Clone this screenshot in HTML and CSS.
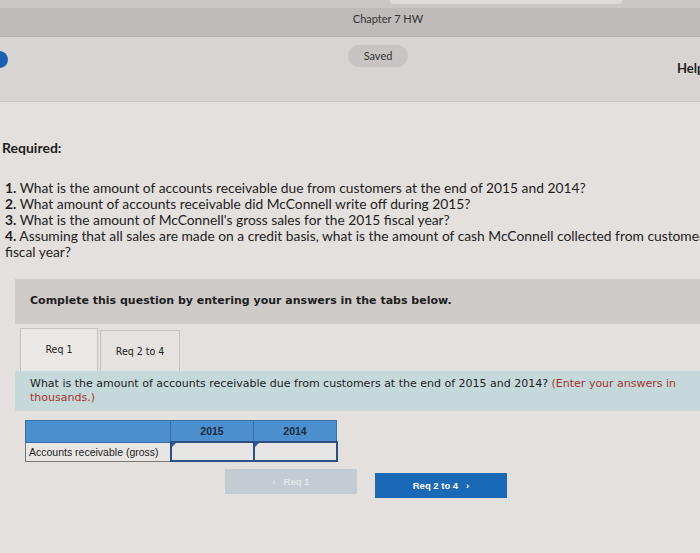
FILE: index.html
```html
<!DOCTYPE html>
<html>
<head>
<meta charset="utf-8">
<link rel="stylesheet" href="styles.css">
</head>
<body>
<div class="topstrip"><div class="addr"></div></div>
<div class="titlebar">Chapter 7 HW</div>
<div class="header">
  <div class="dot"></div>
  <div class="saved">Saved</div>
  <div class="help">Help</div>
</div>
<div class="main">
  <div class="required">Required:</div>
  <ol class="qs">
    <li><b>1.</b> What is the amount of accounts receivable due from customers at the end of 2015 and 2014?</li>
    <li><b>2.</b> What amount of accounts receivable did McConnell write off during 2015?</li>
    <li><b>3.</b> What is the amount of McConnell's gross sales for the 2015 fiscal year?</li>
    <li><span class="nowrap"><b>4.</b> Assuming that all sales are made on a credit basis, what is the amount of cash McConnell collected from customers during the 2015</span><br>fiscal year?</li>
  </ol>
  <div class="complete">Complete this question by entering your answers in the tabs below.</div>
  <div class="tabs">
    <div class="tab active">Req 1</div>
    <div class="tab">Req 2 to 4</div>
  </div>
  <div class="prompt">What is the amount of accounts receivable due from customers at the end of 2015 and 2014? <span class="red">(Enter your answers in thousands.)</span></div>
  <table class="grid">
    <tr class="head"><th class="lbl"></th><th>2015</th><th>2014</th></tr>
    <tr><td class="lbl">Accounts receivable (gross)</td><td class="inp"></td><td class="inp"></td></tr>
  </table>
  <div class="nav">
    <div class="btn prev">&#8249;&nbsp;&nbsp;&nbsp;Req 1</div>
    <div class="btn next">Req 2 to 4&nbsp;&nbsp;&nbsp;&#8250;</div>
  </div>
</div>
</body>
</html>
```
FILE: styles.css
```css
html, body { margin: 0; padding: 0; }
body {
  width: 700px; height: 553px; overflow: hidden;
  background: #e4e0dd;
  font-family: "Lato", "Liberation Sans", sans-serif;
  color: #1e1e1e;
}
.topstrip { height: 8px; background: #c9c6c4; }
.addr { margin-left: 390px; width: 232px; height: 4px; background: #dedbd9; border-radius: 0 0 3px 3px; }
.titlebar {
  height: 28px; background: #bebbba; text-align: center;
  font-size: 11px; line-height: 22px; color: #333; padding-left: 76px;
  border-bottom: 1px solid #b2afae;
}
.header {
  height: 64px; background: #d8d4d2; position: relative;
  border-bottom: 1px solid #cbc7c5;
}
.dot { position: absolute; left: -9px; top: 14px; width: 17px; height: 17px; border-radius: 50%; background: #1b5fb5; }
.saved {
  position: absolute; left: 348px; top: 8px; width: 60px; height: 22px;
  border-radius: 11px; background: #c8c4c3; font-size: 11px; line-height: 22px; text-align: center; color: #333;
}
.help { position: absolute; left: 677px; top: 23px; font-weight: bold; font-size: 13px; color: #222; }
.main { padding-top: 37px; }
.required { font-weight: bold; font-size: 14px; padding-left: 2px; height: 41px; }
.qs { list-style: none; margin: 0; padding: 0 0 0 5px; font-size: 13.8px; line-height: 16px; white-space: nowrap; }
.nowrap { white-space: nowrap; }
.qs b { font-weight: bold; }
.complete {
  margin: 19px 0 0 15px; height: 45px; background: #cfcbc9;
  font-family: "DejaVu Sans", Verdana, sans-serif; font-weight: bold; font-size: 11px;
  line-height: 44px; padding-left: 15px; color: #1e1e1e;
}
.tabs { display: flex; margin: 5px 0 0 20px; height: 42px; align-items: flex-end; gap: 2px; }
.tab {
  width: 78px; height: 40px; background: #e5e2df; border: 1px solid #c5c2c0; border-bottom: none;
  font-family: "DejaVu Sans Condensed", "DejaVu Sans", sans-serif; font-size: 10.5px; text-align: center; line-height: 40px; color: #222;
}
.tab.active { height: 42px; background: #ebe8e5; width: 76px; }
.prompt {
  margin-left: 15px; height: 40px; background: #c5d9da; box-sizing: border-box;
  padding: 6px 18px 0 15px; font-family: "DejaVu Sans", Verdana, sans-serif; font-size: 11px; line-height: 14px; color: #222;
}
.red { color: #a8322c; }
.grid { border-collapse: collapse; margin: 9px 0 0 25px; font-family: "Liberation Sans", Arial, sans-serif; font-size: 10.5px; }
.grid th { background: #4c8fcf; height: 20px; border: 1px solid #3a70a8; font-weight: bold; color: #1b2a3c; width: 82px; padding: 0; }
.grid th.lbl { width: 144px; }
.grid td { height: 17px; border: 1px solid #4a5c78; padding: 0 3px; background: #e8e6e4; }
.grid td.lbl { white-space: nowrap; color: #222; border-color: #777; }
.grid td.inp { border: 2px solid #2d4f86; position: relative; }
.grid td.inp::before { content: ""; position: absolute; left: 0; top: 0; border-left: 4px solid #2d5fa8; border-bottom: 4px solid transparent; }
.nav { display: flex; margin: 7px 0 0 225px; gap: 18px; }
.btn { height: 25px; width: 132px; font-family: "Liberation Sans", Arial, sans-serif; font-size: 9.5px; font-weight: bold; text-align: center; line-height: 25px; }
.prev { background: #c2ccd2; color: #e3e8ea; }
.next { background: #1a69b6; color: #fff; margin-top: 4px; }
```
